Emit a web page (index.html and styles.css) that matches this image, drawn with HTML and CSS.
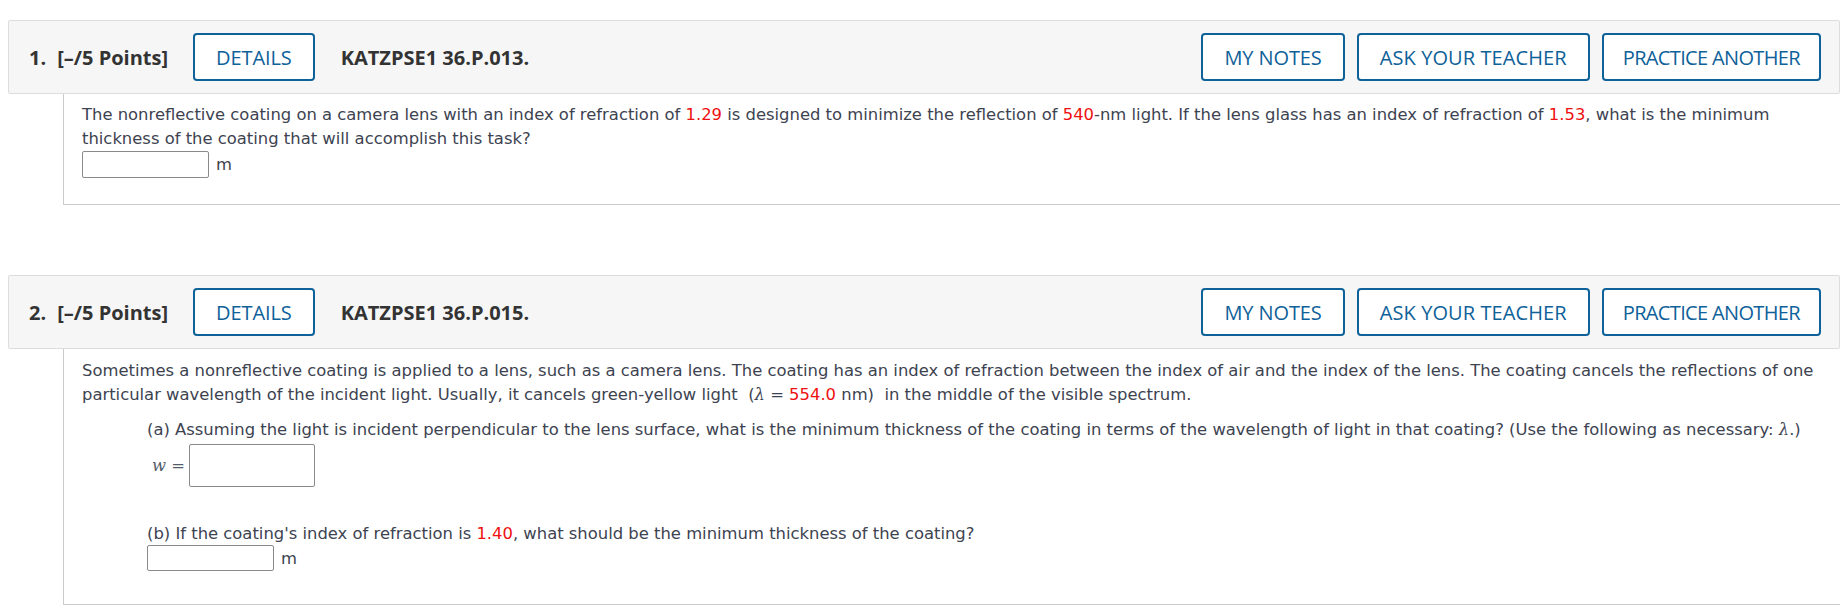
FILE: index.html
```html
<!DOCTYPE html>
<html>
<head>
<meta charset="utf-8">
<link rel="stylesheet" href="styles.css">
</head>
<body>
<div class="page">
  <section class="question q1">
    <div class="qhead">
      <div class="qtitle"><span class="qnum">1.</span><span>[–/5 Points]</span></div>
      <button class="btn">DETAILS</button>
      <div class="qcode">KATZPSE1 36.P.013.</div>
      <div class="spacer"></div>
      <div class="actions">
        <button class="btn">MY NOTES</button>
        <button class="btn btn-wide">ASK YOUR TEACHER</button>
        <button class="btn btn-tight">PRACTICE ANOTHER</button>
      </div>
    </div>
    <div class="qbody qbody1">
      <p class="text">The nonreflective coating on a camera lens with an index of refraction of <span class="red">1.29</span> is designed to minimize the reflection of <span class="red">540</span>-nm light. If the lens glass has an index of refraction of <span class="red">1.53</span>, what is the minimum thickness of the coating that will accomplish this task?</p>
      <div class="answer-row ar1"><span class="input small"></span><span class="unit">m</span></div>
    </div>
  </section>

  <section class="question q2">
    <div class="qhead">
      <div class="qtitle"><span class="qnum">2.</span><span>[–/5 Points]</span></div>
      <button class="btn">DETAILS</button>
      <div class="qcode">KATZPSE1 36.P.015.</div>
      <div class="spacer"></div>
      <div class="actions">
        <button class="btn">MY NOTES</button>
        <button class="btn btn-wide">ASK YOUR TEACHER</button>
        <button class="btn btn-tight">PRACTICE ANOTHER</button>
      </div>
    </div>
    <div class="qbody qbody2">
      <p class="text">Sometimes a nonreflective coating is applied to a lens, such as a camera lens. The coating has an index of refraction between the index of air and the index of the lens. The coating cancels the reflections of one particular wavelength of the incident light. Usually, it cancels green-yellow light &nbsp;(<span class="math">λ</span> = <span class="red">554.0</span> nm) &nbsp;in the middle of the visible spectrum.</p>
      <div class="part">
        <p class="text parta">(a) Assuming the light is incident perpendicular to the lens surface, what is the minimum thickness of the coating in terms of the wavelength of light in that coating? (Use the following as necessary: <span class="math">λ</span>.)</p>
        <div class="answer-row wrow"><span class="wlabel"><span class="math">w</span> =</span><span class="input big"></span></div>
        <p class="text partb">(b) If the coating's index of refraction is <span class="red">1.40</span>, what should be the minimum thickness of the coating?</p>
        <div class="answer-row arb"><span class="input small b"></span><span class="unit">m</span></div>
      </div>
    </div>
  </section>
</div>
</body>
</html>
```

FILE: styles.css
```css
html, body {
  margin: 0;
  padding: 0;
  background: #ffffff;
}
body {
  padding: 8px;
}
.page {
  width: 1832px;
}
.question.q1 {
  margin-top: 12px;
}
.question.q2 {
  margin-top: 70px;
}
.qhead {
  display: flex;
  align-items: center;
  height: 74px;
  box-sizing: border-box;
  padding: 0 18px 0 20px;
  background: #f6f6f6;
  border: 1px solid #dddddd;
  border-radius: 2px;
  font-family: "Open Sans", "Liberation Sans", sans-serif;
  color: #333333;
}
.qtitle {
  font-size: 20px;
  font-weight: 700;
  margin-right: 25px;
}
.qnum {
  margin-right: 11px;
}
.qcode {
  font-size: 20px;
  font-weight: 700;
  margin-left: 26px;
}
.spacer {
  flex: 1;
}
.actions {
  display: flex;
  gap: 12px;
}
.btn {
  height: 48px;
  box-sizing: border-box;
  padding: 0 21px;
  border: 2px solid #0e6199;
  border-radius: 4px;
  background: #ffffff;
  color: #0e6199;
  font-family: "Open Sans", "Liberation Sans", sans-serif;
  font-size: 20px;
  font-weight: 400;
  letter-spacing: -0.1px;
}
.btn-wide {
  letter-spacing: 0.1px;
}
.btn-tight {
  padding: 0 19px;
  letter-spacing: -0.65px;
}
.qbody {
  margin-left: 55px;
  border-left: 1px solid #cccccc;
  border-bottom: 1px solid #cccccc;
  padding-left: 18px;
  padding-right: 12px;
  font-family: "DejaVu Sans", Verdana, sans-serif;
  font-size: 16.4px;
  color: #3d4351;
}
.qbody1 {
  padding-top: 9px;
  padding-bottom: 26px;
}
.qbody2 {
  padding-top: 10px;
  padding-bottom: 33px;
}
.text {
  margin: 0;
  line-height: 24px;
}
.red {
  color: #ee1111;
}
.math {
  font-family: "DejaVu Serif", serif;
  font-style: italic;
}
.answer-row {
  display: flex;
  align-items: center;
}
.ar1 {
  margin-top: 0;
}
.input {
  display: block;
  box-sizing: border-box;
  border: 1px solid #8a8a8a;
  border-radius: 2px;
  background: #ffffff;
}
.input.small {
  width: 127px;
  height: 27px;
}
.input.small.b {
  height: 26px;
}
.input.big {
  width: 126px;
  height: 43px;
}
.unit {
  margin-left: 7px;
}
.part {
  padding-left: 65px;
}
.parta {
  margin-top: 11px;
}
.wrow {
  margin-top: 2px;
}
.wlabel {
  width: 42px;
  padding-left: 5px;
  box-sizing: border-box;
  color: #555c6a;
}
.partb {
  margin-top: 35px;
}
.arb {
  margin-top: -1px;
}
```
